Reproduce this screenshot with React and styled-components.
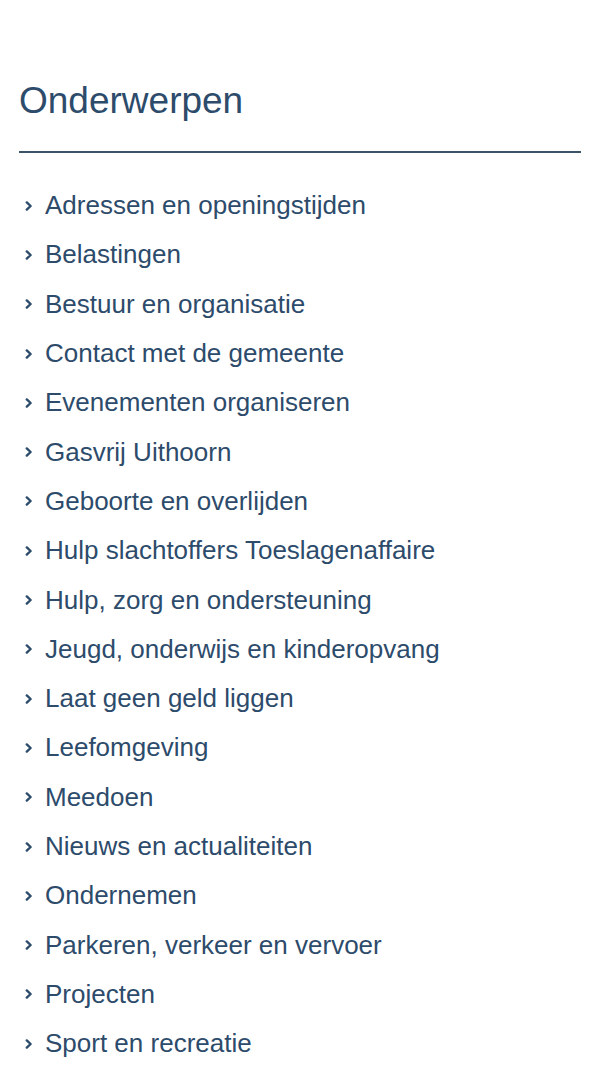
import React from 'react';
import styled, { createGlobalStyle } from 'styled-components';

const GlobalStyle = createGlobalStyle`
  html, body {
    margin: 0;
    padding: 0;
    background: #ffffff;
  }
  body {
    font-family: "Liberation Sans", Arial, sans-serif;
  }
`;

const topics = [
  'Adressen en openingstijden',
  'Belastingen',
  'Bestuur en organisatie',
  'Contact met de gemeente',
  'Evenementen organiseren',
  'Gasvrij Uithoorn',
  'Geboorte en overlijden',
  'Hulp slachtoffers Toeslagenaffaire',
  'Hulp, zorg en ondersteuning',
  'Jeugd, onderwijs en kinderopvang',
  'Laat geen geld liggen',
  'Leefomgeving',
  'Meedoen',
  'Nieuws en actualiteiten',
  'Ondernemen',
  'Parkeren, verkeer en vervoer',
  'Projecten',
  'Sport en recreatie',
];

const Section = styled.section`
  padding: 79px 19px 0;
`;

const Title = styled.h2`
  margin: 0;
  padding-bottom: 29px;
  font-size: 37px;
  line-height: 43px;
  font-weight: 400;
  color: #2d4b6b;
  border-bottom: 2px solid #3b5268;
`;

const List = styled.ul`
  list-style: none;
  margin: 0;
  padding: 28px 0 0;
`;

const Item = styled.li`
  display: flex;
  align-items: center;
  height: 49.3px;
`;

const Link = styled.a`
  display: flex;
  align-items: center;
  gap: 12px;
  padding-left: 6px;
  color: #2d4b6b;
  font-size: 26px;
  text-decoration: none;
`;

const Chevron = () => (
  <svg width="8" height="10" viewBox="0 0 8 10" aria-hidden="true">
    <polyline
      points="1.8,1.4 5.6,5 1.8,8.6"
      fill="none"
      stroke="#2d4b6b"
      strokeWidth="2.4"
      strokeLinecap="round"
      strokeLinejoin="round"
    />
  </svg>
);

export default function App() {
  return (
    <>
      <GlobalStyle />
      <Section>
        <Title>Onderwerpen</Title>
        <List>
          {topics.map((t) => (
            <Item key={t}>
              <Link href="#">
                <Chevron />
                {t}
              </Link>
            </Item>
          ))}
        </List>
      </Section>
    </>
  );
}
